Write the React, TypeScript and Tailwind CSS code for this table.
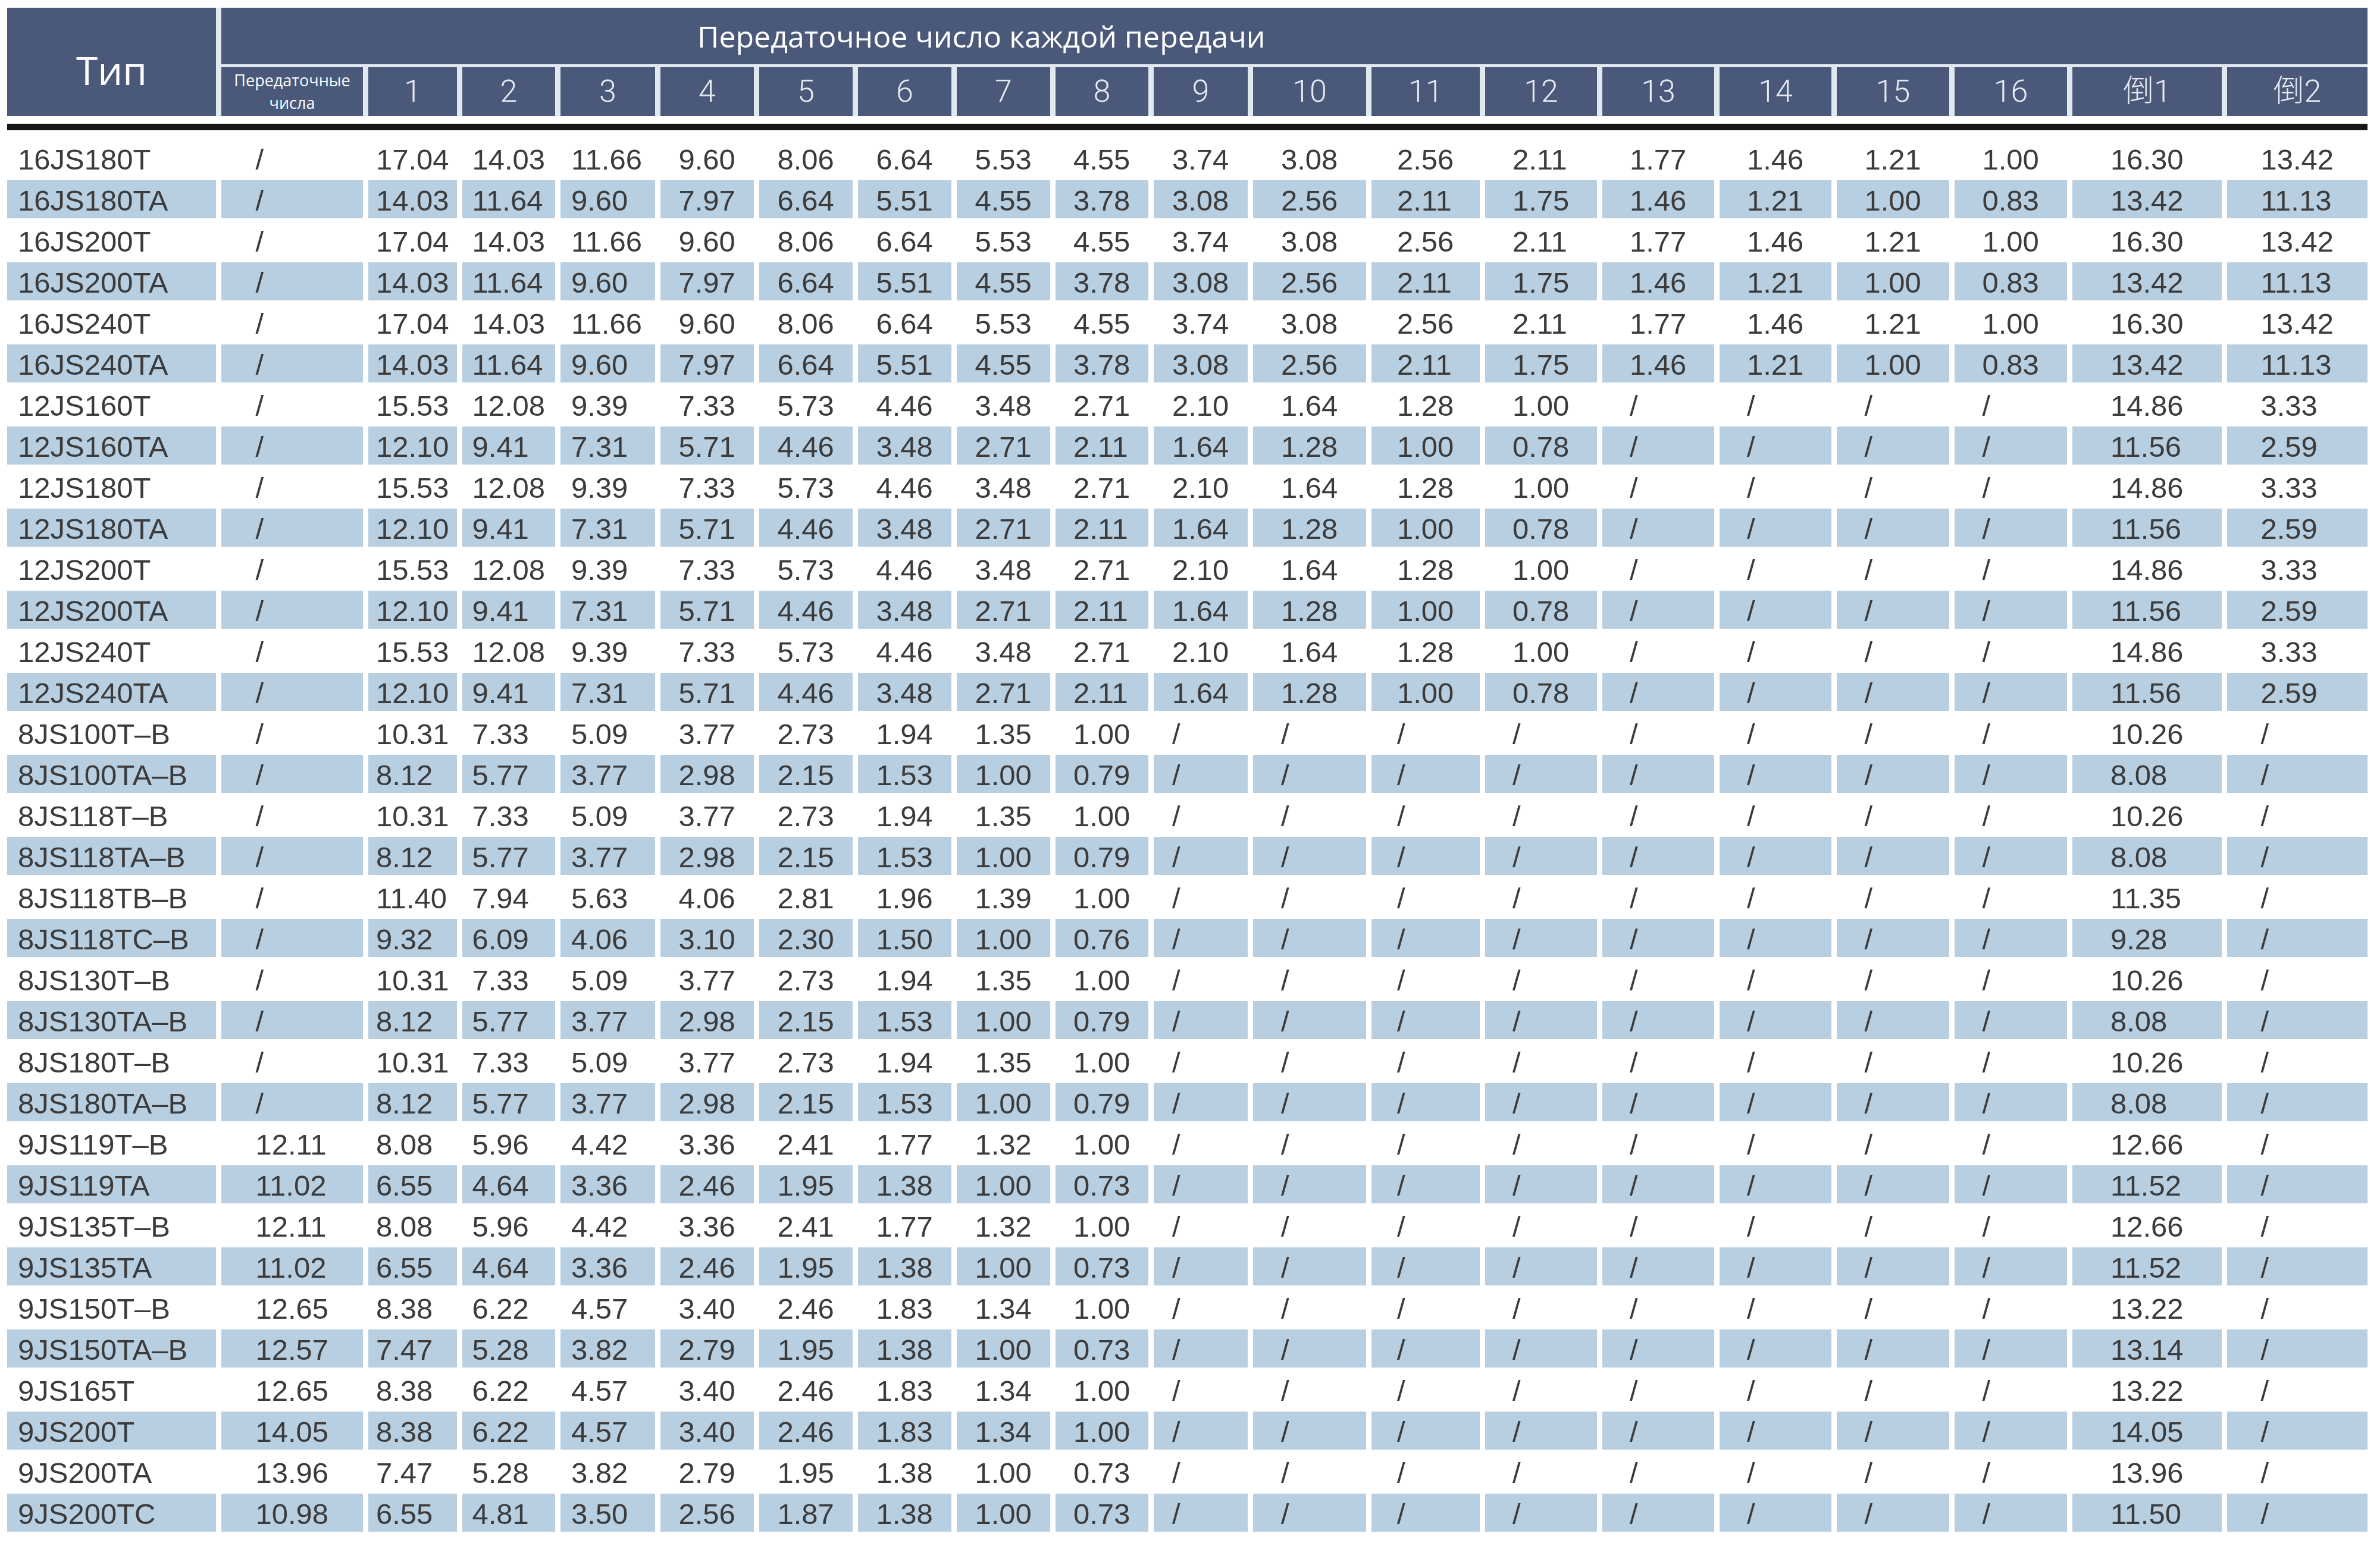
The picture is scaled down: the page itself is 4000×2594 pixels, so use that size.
import React from 'react';

// Ширины колонок: Тип, Передаточные числа, 1..16, 倒1, 倒2
const COLS =
  'grid grid-cols-[351px_238px_149px_156px_159px_157px_157px_157px_157px_156px_158px_190px_182px_188px_188px_188px_189px_189px_251px_236px] gap-x-[9px]';

const GEARS = ['1', '2', '3', '4', '5', '6', '7', '8', '9', '10', '11', '12', '13', '14', '15', '16', '倒1', '倒2'];

// колонки, где встречаются пятизначные значения (12.65)
const WIDE = [0, 1, 2, 3, 17, 18];

const S8 = ['/', '/', '/', '/', '/', '/', '/', '/'];

const R16T = ['/', '17.04', '14.03', '11.66', '9.60', '8.06', '6.64', '5.53', '4.55', '3.74', '3.08', '2.56', '2.11', '1.77', '1.46', '1.21', '1.00', '16.30', '13.42'];
const R16TA = ['/', '14.03', '11.64', '9.60', '7.97', '6.64', '5.51', '4.55', '3.78', '3.08', '2.56', '2.11', '1.75', '1.46', '1.21', '1.00', '0.83', '13.42', '11.13'];
const R12T = ['/', '15.53', '12.08', '9.39', '7.33', '5.73', '4.46', '3.48', '2.71', '2.10', '1.64', '1.28', '1.00', '/', '/', '/', '/', '14.86', '3.33'];
const R12TA = ['/', '12.10', '9.41', '7.31', '5.71', '4.46', '3.48', '2.71', '2.11', '1.64', '1.28', '1.00', '0.78', '/', '/', '/', '/', '11.56', '2.59'];
const R8T = ['/', '10.31', '7.33', '5.09', '3.77', '2.73', '1.94', '1.35', '1.00', ...S8, '10.26', '/'];
const R8TA = ['/', '8.12', '5.77', '3.77', '2.98', '2.15', '1.53', '1.00', '0.79', ...S8, '8.08', '/'];

const rows: [string, string[]][] = [
  ['16JS180T', R16T],
  ['16JS180TA', R16TA],
  ['16JS200T', R16T],
  ['16JS200TA', R16TA],
  ['16JS240T', R16T],
  ['16JS240TA', R16TA],
  ['12JS160T', R12T],
  ['12JS160TA', R12TA],
  ['12JS180T', R12T],
  ['12JS180TA', R12TA],
  ['12JS200T', R12T],
  ['12JS200TA', R12TA],
  ['12JS240T', R12T],
  ['12JS240TA', R12TA],
  ['8JS100T–B', R8T],
  ['8JS100TA–B', R8TA],
  ['8JS118T–B', R8T],
  ['8JS118TA–B', R8TA],
  ['8JS118TB–B', ['/', '11.40', '7.94', '5.63', '4.06', '2.81', '1.96', '1.39', '1.00', ...S8, '11.35', '/']],
  ['8JS118TC–B', ['/', '9.32', '6.09', '4.06', '3.10', '2.30', '1.50', '1.00', '0.76', ...S8, '9.28', '/']],
  ['8JS130T–B', R8T],
  ['8JS130TA–B', R8TA],
  ['8JS180T–B', R8T],
  ['8JS180TA–B', R8TA],
  ['9JS119T–B', ['12.11', '8.08', '5.96', '4.42', '3.36', '2.41', '1.77', '1.32', '1.00', ...S8, '12.66', '/']],
  ['9JS119TA', ['11.02', '6.55', '4.64', '3.36', '2.46', '1.95', '1.38', '1.00', '0.73', ...S8, '11.52', '/']],
  ['9JS135T–B', ['12.11', '8.08', '5.96', '4.42', '3.36', '2.41', '1.77', '1.32', '1.00', ...S8, '12.66', '/']],
  ['9JS135TA', ['11.02', '6.55', '4.64', '3.36', '2.46', '1.95', '1.38', '1.00', '0.73', ...S8, '11.52', '/']],
  ['9JS150T–B', ['12.65', '8.38', '6.22', '4.57', '3.40', '2.46', '1.83', '1.34', '1.00', ...S8, '13.22', '/']],
  ['9JS150TA–B', ['12.57', '7.47', '5.28', '3.82', '2.79', '1.95', '1.38', '1.00', '0.73', ...S8, '13.14', '/']],
  ['9JS165T', ['12.65', '8.38', '6.22', '4.57', '3.40', '2.46', '1.83', '1.34', '1.00', ...S8, '13.22', '/']],
  ['9JS200T', ['14.05', '8.38', '6.22', '4.57', '3.40', '2.46', '1.83', '1.34', '1.00', ...S8, '14.05', '/']],
  ['9JS200TA', ['13.96', '7.47', '5.28', '3.82', '2.79', '1.95', '1.38', '1.00', '0.73', ...S8, '13.96', '/']],
  ['9JS200TC', ['10.98', '6.55', '4.81', '3.50', '2.56', '1.87', '1.38', '1.00', '0.73', ...S8, '11.50', '/']],
];

function DataRow({ name, values, shaded }: { name: string; values: string[]; shaded: boolean }) {
  const cell = shaded ? 'h-[64px] flex items-center pt-[6px] bg-[#b8cfe1]' : 'h-[64px] flex items-center pt-[6px]';
  return (
    <div className={`${COLS} h-[69px]`}>
      <div className={`${cell} pl-[18px]`}>{name}</div>
      {values.map((v, i) => (
        <div key={i} className={`${cell} justify-center`}>
          <span className={WIDE.includes(i) ? 'w-[123px] text-left' : 'w-[96px] text-left'}>{v}</span>
        </div>
      ))}
    </div>
  );
}

export default function App() {
  return (
    <div className="min-h-screen bg-white pt-[13px] pl-[12px] w-[4000px]">
      <div className="w-[3967px]">
        {/* Шапка таблицы */}
        <div className={`${COLS} gap-y-[5px] grid-rows-[95px_82px] bg-[#e2e8f0] text-white font-['Open_Sans',sans-serif]`}>
          <div className="row-span-2 bg-[#4a5879] flex items-center justify-center pt-[26px] text-[66px] leading-none">
            Тип
          </div>
          <div className="col-span-19 bg-[#4a5879] flex items-center pl-[800px] text-[50px] leading-none">
            Передаточное число каждой передачи
          </div>
          <div className="bg-[#4a5879] flex flex-col items-center justify-center text-[27px] leading-[38px]">
            <span>Передаточные</span>
            <span>числа</span>
          </div>
          {GEARS.map((g) => (
            <div
              key={g}
              className="bg-[#4a5879] flex items-center justify-center text-[52px] font-light text-[#e6ebf3] font-['Roboto','Noto_Sans_CJK_SC',sans-serif]"
            >
              {g}
            </div>
          ))}
        </div>

        <div className="h-[13px]" />
        <div className="h-[11px] bg-[#161616]" />
        <div className="h-[15px]" />

        {/* Строки данных */}
        <div className="text-[49px] text-[#3b3b3b] font-['Liberation_Sans',Arial,sans-serif]">
          {rows.map(([name, values], r) => (
            <DataRow key={name + r} name={name} values={values} shaded={r % 2 === 1} />
          ))}
        </div>
      </div>
    </div>
  );
}
